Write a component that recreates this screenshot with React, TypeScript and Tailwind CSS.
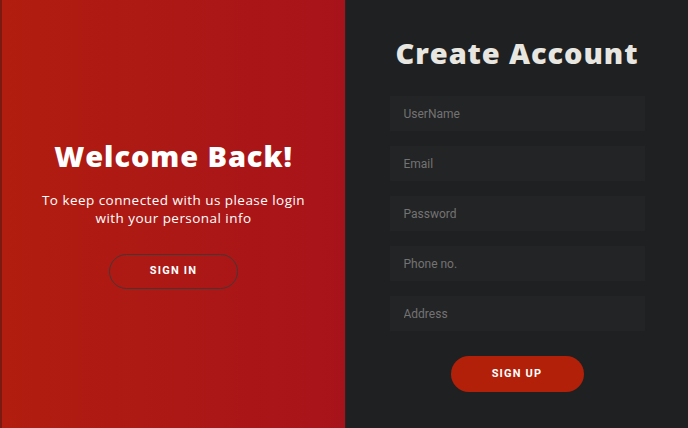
import React from "react";

const fields = ["UserName", "Email", "Password", "Phone no.", "Address"];

const App = () => {
  return (
    <div className="flex w-[688px] h-[428px] overflow-hidden bg-[#1f2022]">
      <div className="flex flex-col items-center justify-center w-[345px] h-full border-l-2 border-[#7a1a10] bg-gradient-to-r from-[#b11d0e] to-[#a7131a] text-white">
        <h1 className="text-[29px] leading-[34px] font-extrabold tracking-[0.9px] font-['Open_Sans',sans-serif]">
          Welcome Back!
        </h1>
        <p className="mt-[18px] text-center text-[13.5px] leading-[18px] tracking-[0.45px] font-['Open_Sans',sans-serif]">
          To keep connected with us please login
          <br />
          with your personal info
        </p>
        <button className="mt-[27px] w-[129px] h-[35px] rounded-full border border-[#453636] text-[11px] font-bold tracking-[1.2px] font-['Roboto',sans-serif]">
          SIGN IN
        </button>
      </div>
      <div className="flex flex-col items-center flex-1 h-full border-l border-[#2a2223] pt-[34px]">
        <h2 className="text-[29px] leading-[38px] font-extrabold tracking-[0.9px] text-[#e8e6e1] font-['Open_Sans',sans-serif]">
          Create Account
        </h2>
        <div className="flex flex-col gap-[15px] mt-[24px]">
          {fields.map((f) => (
            <input
              key={f}
              placeholder={f}
              className="w-[255px] h-[35px] px-[14px] bg-[#232426] text-[12px] text-white placeholder:text-[#737373] outline-none font-['Roboto',sans-serif]"
            />
          ))}
        </div>
        <button className="mt-[25px] w-[133px] h-[36px] rounded-full bg-[#b22009] text-white text-[11px] font-bold tracking-[1.2px] font-['Roboto',sans-serif]">
          SIGN UP
        </button>
      </div>
    </div>
  );
};

export default App;
